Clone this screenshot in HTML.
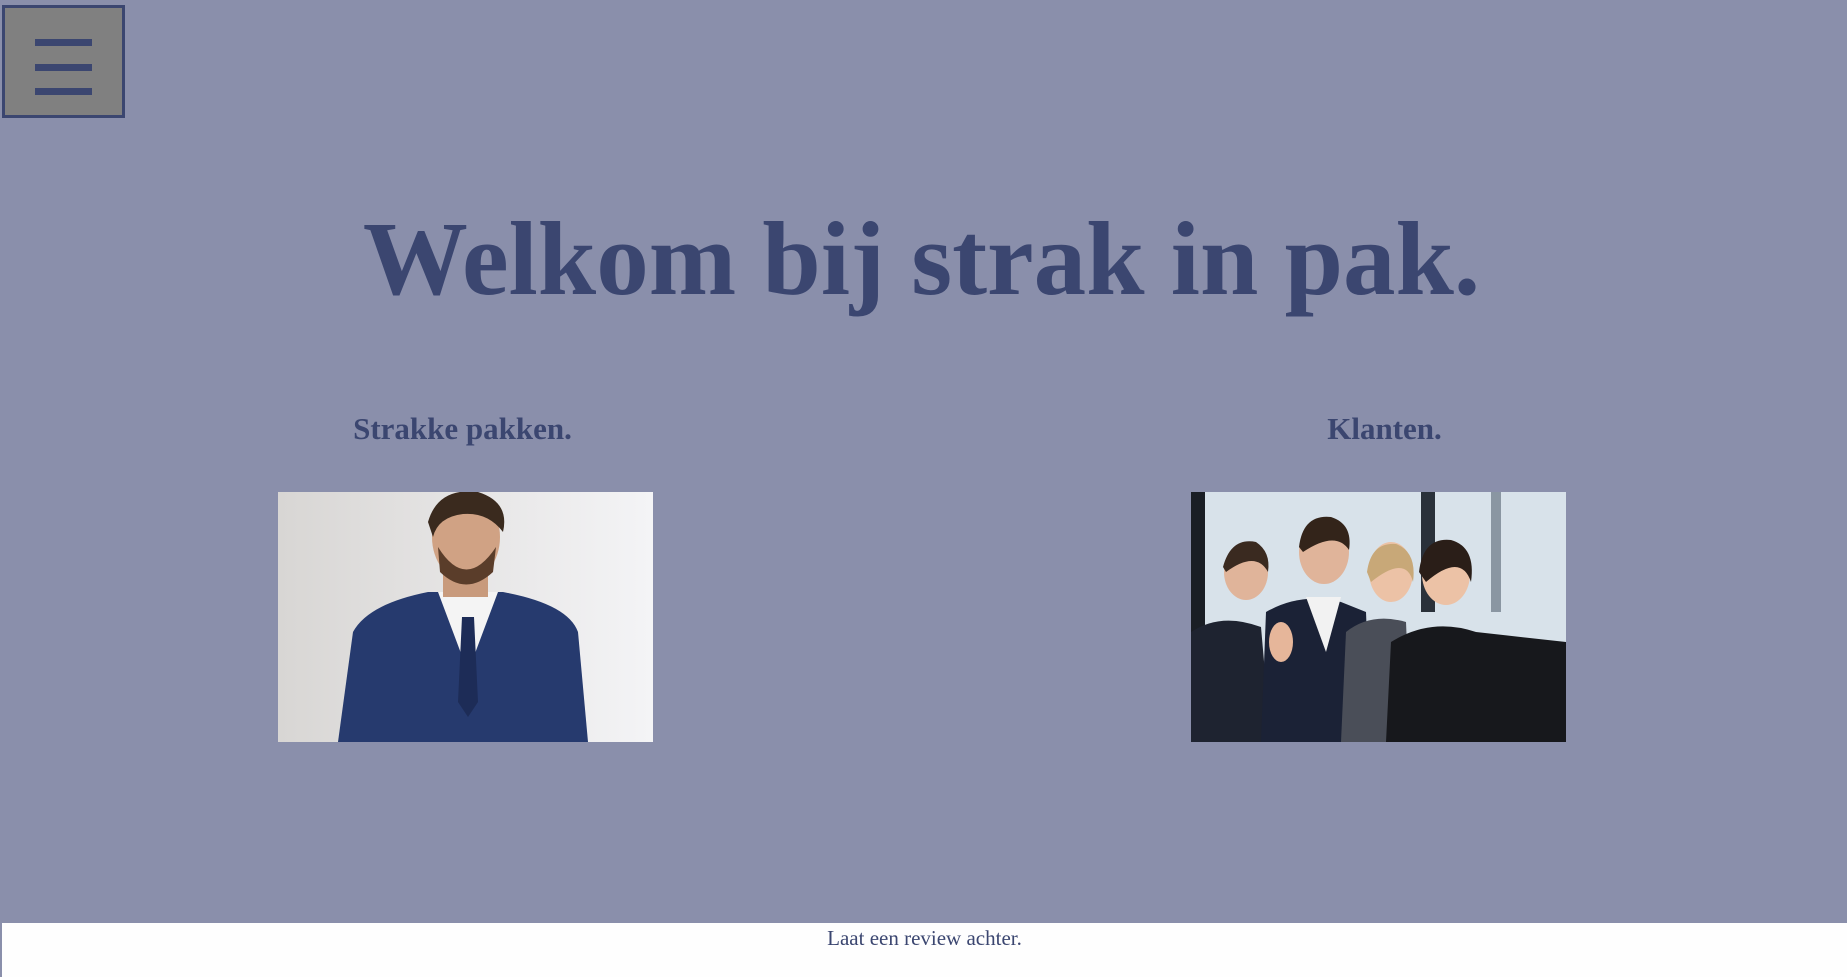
<!DOCTYPE html>
<html><head><meta charset="utf-8"><style>
html,body{margin:0;padding:0;}
body{width:1847px;height:977px;background:#8a8fab;position:relative;overflow:hidden;font-family:"Liberation Serif",serif;color:#3b4670;}
.menu{position:absolute;left:2px;top:5px;width:117px;height:107px;border:3px solid #3b4670;background:#808080;}
.bar{position:absolute;left:30px;width:57px;height:7px;background:#3b4670;}
h1{position:absolute;top:194px;left:0;width:1843px;text-align:center;margin:0;font-size:105px;font-weight:bold;line-height:130px;}
h2{position:absolute;top:411px;margin:0;font-size:31px;font-weight:bold;text-align:center;width:925px;}
.img{position:absolute;top:492px;width:375px;height:250px;}
.foot{position:absolute;left:0;top:923px;width:1845px;height:54px;background:#fefefe;border-left:2px solid #8a8fab;}
.foot p{margin:0;text-align:center;font-size:21px;line-height:30px;padding-top:0px;}
</style></head><body>
<div class="menu"><div class="bar" style="top:31px"></div><div class="bar" style="top:56px"></div><div class="bar" style="top:80px"></div></div>
<h1>Welkom bij strak in pak.</h1>
<h2 style="left:0">Strakke pakken.</h2>
<h2 style="left:922px">Klanten.</h2>
<svg class="img" style="left:278px" viewBox="0 0 375 250">
<defs><linearGradient id="g1" x1="0" x2="1"><stop offset="0" stop-color="#d8d6d4"/><stop offset="1" stop-color="#f4f4f6"/></linearGradient></defs>
<rect width="375" height="250" fill="url(#g1)"/>
<path d="M60 250 L75 140 Q90 112 150 100 L225 100 Q290 112 300 140 L310 250Z" fill="#263a6e"/>
<path d="M160 100 L190 180 L220 100Z" fill="#f4f4f4"/>
<path d="M184 125 L196 125 L200 210 L190 225 L180 210Z" fill="#1d2c57"/>
<rect x="165" y="50" width="45" height="55" fill="#c89a7c"/>
<ellipse cx="188" cy="45" rx="34" ry="44" fill="#d0a284"/>
<path d="M150 30 Q160 -5 200 0 Q232 10 225 40 Q210 20 185 22 Q160 25 155 45Z" fill="#3a2a1e"/>
<path d="M160 55 Q188 100 218 55 L215 80 Q188 105 162 80Z" fill="#5a3d2a"/>
</svg>
<svg class="img" style="left:1191px" viewBox="0 0 375 250">
<rect width="375" height="250" fill="#d8e2ea"/>
<rect x="0" y="0" width="14" height="250" fill="#1a1e25"/>
<rect x="230" y="0" width="14" height="120" fill="#2a313a"/>
<rect x="300" y="0" width="10" height="120" fill="#8a96a2"/>
<path d="M0 250 L0 140 Q30 120 70 135 L80 250Z" fill="#1e2330"/>
<ellipse cx="55" cy="80" rx="22" ry="28" fill="#e0b49a"/><path d="M32 75 Q40 45 65 50 Q80 60 77 80 Q65 58 35 80Z" fill="#3a2a20"/>
<path d="M70 250 L75 120 Q110 100 150 110 L175 120 L180 250Z" fill="#1b2236"/>
<path d="M115 105 L135 160 L150 105Z" fill="#f2f2f2"/>
<ellipse cx="133" cy="60" rx="25" ry="32" fill="#e0b49a"/><path d="M108 55 Q112 22 140 25 Q162 32 158 58 Q145 38 112 60Z" fill="#33241a"/>
<ellipse cx="90" cy="150" rx="12" ry="20" fill="#e6b69a"/>
<path d="M150 250 L155 140 Q180 120 215 130 L220 250Z" fill="#4a4e58"/>
<ellipse cx="200" cy="80" rx="22" ry="30" fill="#ecc2a6"/><path d="M176 80 Q180 50 205 52 Q226 60 222 90 Q215 62 180 90Z" fill="#c8a878"/>
<path d="M195 250 L200 150 Q240 125 285 140 L375 150 L375 250Z" fill="#17181c"/>
<ellipse cx="255" cy="82" rx="24" ry="31" fill="#ecc2a6"/><path d="M228 80 Q232 45 260 48 Q285 55 280 90 Q270 60 235 90Z" fill="#2a1e18"/>
</svg>
<div class="foot"><p>Laat een review achter.</p></div>
</body></html>
